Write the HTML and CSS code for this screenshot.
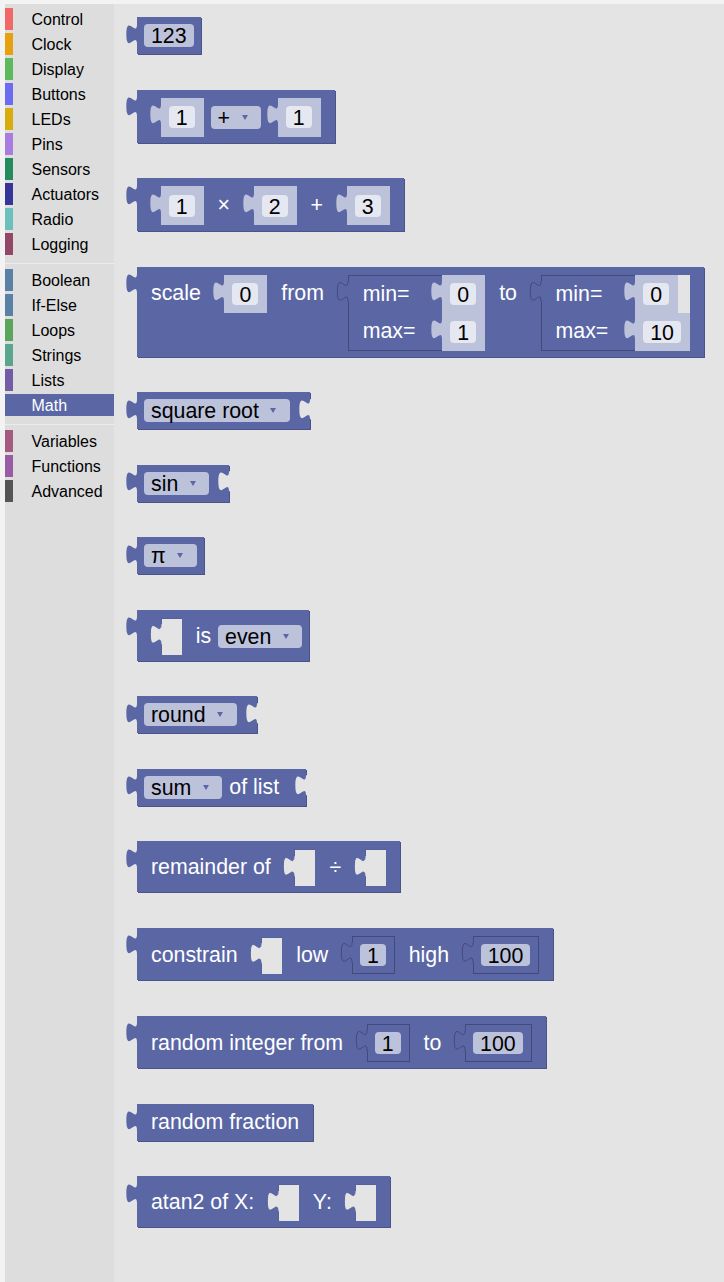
FILE: index.html
```html
<!DOCTYPE html>
<html>
<head>
<meta charset="utf-8">
<title>Math</title>
<link rel="stylesheet" href="styles.css">
</head>
<body>
<svg class="defs" aria-hidden="true"><defs><symbol id="tab" viewBox="-9 4 10 17"><path stroke="none" d="M1,20 H0 C0,10 -8,28 -8,12.5 S0,15 0,5 H1 Z"/><path fill="none" vector-effect="non-scaling-stroke" d="M0,20 C0,10 -8,28 -8,12.5 S0,15 0,5"/></symbol></defs></svg>
<div class="app">
  <nav class="toolbox">
    <div class="cat k-control">Control</div>
    <div class="cat k-clock">Clock</div>
    <div class="cat k-display">Display</div>
    <div class="cat k-buttons">Buttons</div>
    <div class="cat k-leds">LEDs</div>
    <div class="cat k-pins">Pins</div>
    <div class="cat k-sensors">Sensors</div>
    <div class="cat k-actuators">Actuators</div>
    <div class="cat k-radio">Radio</div>
    <div class="cat k-logging">Logging</div>
    <div class="sep"></div>
    <div class="cat k-logic">Boolean</div>
    <div class="cat k-logic">If-Else</div>
    <div class="cat k-loops">Loops</div>
    <div class="cat k-text">Strings</div>
    <div class="cat k-lists">Lists</div>
    <div class="cat k-math sel">Math</div>
    <div class="sep"></div>
    <div class="cat k-vars">Variables</div>
    <div class="cat k-procs">Functions</div>
    <div class="cat k-adv">Advanced</div>
  </nav>
  <main class="flyout">
    <div class="blk"><svg class="tab"><use href="#tab"/></svg><span class="fld">123</span></div>

    <div class="blk inl"><svg class="tab"><use href="#tab"/></svg><span class="inp"><svg class="tab t-shd"><use href="#tab"/></svg><span class="shd"><span class="nf">1</span></span></span><span class="fld dd">+</span><span class="inp"><svg class="tab t-shd"><use href="#tab"/></svg><span class="shd"><span class="nf">1</span></span></span></div>

    <div class="blk inl"><svg class="tab"><use href="#tab"/></svg><span class="inp"><svg class="tab t-shd"><use href="#tab"/></svg><span class="shd"><span class="nf">1</span></span></span><span class="lbl">×</span><span class="inp"><svg class="tab t-shd"><use href="#tab"/></svg><span class="shd"><span class="nf">2</span></span></span><span class="lbl">+</span><span class="inp"><svg class="tab t-shd"><use href="#tab"/></svg><span class="shd"><span class="nf">3</span></span></span></div>

    <div class="blk tall"><svg class="tab"><use href="#tab"/></svg><span class="lbl">scale</span><span class="inp"><svg class="tab t-shd"><use href="#tab"/></svg><span class="shd s38"><span class="nf">0</span></span></span><span class="lbl">from</span><span class="inp"><svg class="tab t-box"><use href="#tab"/></svg><span class="obj"><span class="obj-body"><span class="ol">min=</span><span class="ol">max=</span></span><span class="inp r1"><svg class="tab t-shd"><use href="#tab"/></svg><span class="shd s38"><span class="nf">0</span></span></span><span class="inp r2"><svg class="tab t-shd"><use href="#tab"/></svg><span class="shd s38"><span class="nf">1</span></span></span></span></span><span class="lbl">to</span><span class="inp"><svg class="tab t-box"><use href="#tab"/></svg><span class="obj"><span class="obj-body"><span class="ol">min=</span><span class="ol">max=</span></span><span class="inp r1"><svg class="tab t-shd"><use href="#tab"/></svg><span class="shd s38"><span class="nf">0</span></span></span><span class="inp r2"><svg class="tab t-shd"><use href="#tab"/></svg><span class="shd s38"><span class="nf">10</span></span></span></span></span></div>

    <div class="blk ext"><svg class="tab"><use href="#tab"/></svg><span class="fld dd">square root</span><svg class="notch"><use href="#tab"/></svg></div>

    <div class="blk ext"><svg class="tab"><use href="#tab"/></svg><span class="fld dd">sin</span><svg class="notch"><use href="#tab"/></svg></div>

    <div class="blk"><svg class="tab"><use href="#tab"/></svg><span class="fld dd">π</span></div>

    <div class="blk inl"><svg class="tab"><use href="#tab"/></svg><span class="inp"><svg class="tab t-hole"><use href="#tab"/></svg><span class="hole"></span></span><span class="lbl">is</span><span class="fld dd">even</span></div>

    <div class="blk ext"><svg class="tab"><use href="#tab"/></svg><span class="fld dd">round</span><svg class="notch"><use href="#tab"/></svg></div>

    <div class="blk ext"><svg class="tab"><use href="#tab"/></svg><span class="fld dd">sum</span><span class="lbl">of list</span><svg class="notch"><use href="#tab"/></svg></div>

    <div class="blk inl"><svg class="tab"><use href="#tab"/></svg><span class="lbl">remainder of</span><span class="inp"><svg class="tab t-hole"><use href="#tab"/></svg><span class="hole"></span></span><span class="lbl">÷</span><span class="inp"><svg class="tab t-hole"><use href="#tab"/></svg><span class="hole"></span></span></div>

    <div class="blk inl"><svg class="tab"><use href="#tab"/></svg><span class="lbl">constrain</span><span class="inp"><svg class="tab t-hole"><use href="#tab"/></svg><span class="hole"></span></span><span class="lbl">low</span><span class="inp"><svg class="tab t-box"><use href="#tab"/></svg><span class="box"><span class="nf">1</span></span></span><span class="lbl">high</span><span class="inp"><svg class="tab t-box"><use href="#tab"/></svg><span class="box"><span class="nf">100</span></span></span></div>

    <div class="blk inl"><svg class="tab"><use href="#tab"/></svg><span class="lbl">random integer from</span><span class="inp"><svg class="tab t-box"><use href="#tab"/></svg><span class="box"><span class="nf">1</span></span></span><span class="lbl">to</span><span class="inp"><svg class="tab t-box"><use href="#tab"/></svg><span class="box"><span class="nf">100</span></span></span></div>

    <div class="blk"><svg class="tab"><use href="#tab"/></svg><span class="lbl">random fraction</span></div>

    <div class="blk inl"><svg class="tab"><use href="#tab"/></svg><span class="lbl">atan2 of X:</span><span class="inp"><svg class="tab t-hole"><use href="#tab"/></svg><span class="hole"></span></span><span class="lbl">Y:</span><span class="inp"><svg class="tab t-hole"><use href="#tab"/></svg><span class="hole"></span></span></div>
  </main>
</div>
</body>
</html>
```

FILE: styles.css
```css
* { box-sizing: border-box; }
html, body { margin: 0; padding: 0; }
body {
  background: #f3f3f3;
  font-family: "Liberation Sans", Arial, sans-serif;
  width: 724px;
  height: 1282px;
  overflow: hidden;
}
.defs { position: absolute; width: 0; height: 0; overflow: hidden; }

.app {
  display: flex;
  height: 1282px;
  padding: 4px 0 0 5px;
}

/* ---------- toolbox ---------- */
.toolbox {
  flex: none;
  width: 109px;
  background: #dddddd;
  padding-top: 4px;
}
.cat {
  height: 22px;
  margin-bottom: 3px;
  border-left: 8px solid #888;
  padding-left: 18.5px;
  font-size: 16px;
  line-height: 24px;
  color: #000;
  white-space: nowrap;
}
.sep {
  height: 1px;
  background: #ececec;
  margin: 8px 0 5px;
}
.k-control { border-left-color: #f06868; }
.k-clock { border-left-color: #e8a10e; }
.k-display { border-left-color: #5cba5c; }
.k-buttons { border-left-color: #6b6cef; }
.k-leds { border-left-color: #d9ac0e; }
.k-pins { border-left-color: #a97ddf; }
.k-sensors { border-left-color: #238b5d; }
.k-actuators { border-left-color: #36369a; }
.k-radio { border-left-color: #6bbfbd; }
.k-logging { border-left-color: #934766; }
.k-logic { border-left-color: #5b80a5; }
.k-loops { border-left-color: #5ba55b; }
.k-text { border-left-color: #5ba58c; }
.k-lists { border-left-color: #745ba5; }
.k-math { border-left-color: #5b67a5; }
.k-vars { border-left-color: #a55b80; }
.k-procs { border-left-color: #995ba5; }
.k-adv { border-left-color: #555555; }
.cat.sel { background: #5b67a5; color: #fff; }

/* ---------- flyout ---------- */
.flyout {
  flex: 1;
  background: #e4e4e4;
  padding: 13.3px 0 0 23px;
  display: flex;
  flex-direction: column;
  align-items: flex-start;
  gap: 35.5px;
}

.blk {
  position: relative;
  display: flex;
  align-items: center;
  background: #5b67a5;
  padding: 7px;
  box-shadow: 1px 1px 0 #4a5487;
  font-size: 16pt;
  white-space: nowrap;
}
.blk.inl { padding: 8px 7px 6px; }
.blk.tall { padding: 8px 7px 6px; align-items: flex-start; }
.blk.ext { padding-right: 20px; }

.tab {
  position: absolute;
  left: -12px;
  top: 5.33px;
  width: 13.33px;
  height: 22.67px;
  fill: #5b67a5;
  stroke-width: 1px;
  overflow: visible;
}
.tab.t-shd { fill: #bdc2db; }
.tab.t-hole { fill: #e4e4e4; stroke: #56619b; }
.tab.t-box { fill: #5b67a5; stroke: #414a7c; }
.notch {
  position: absolute;
  right: -1.33px;
  top: 5.33px;
  width: 13.33px;
  height: 22.67px;
  fill: #e4e4e4;
}

.lbl {
  color: #fff;
  padding: 0 7px;
  line-height: 23px;
}
.tall .lbl { line-height: 36px; }

.fld {
  display: flex;
  align-items: center;
  height: 23px;
  line-height: 21px;
  padding: 2px 7px 0;
  border-radius: 4px;
  background: rgba(255, 255, 255, 0.6);
  color: #000;
}
.dd { padding-right: 13.5px; }
.dd::after {
  content: "";
  margin-left: 11.5px;
  margin-top: -2px;
  border-left: 3px solid transparent;
  border-right: 3px solid transparent;
  border-top: 5px solid #5b67a5;
}

.inp {
  position: relative;
  display: block;
  flex: none;
  margin: 0 7px 0 16.67px;
}
.shd {
  display: flex;
  align-items: center;
  height: 39px;
  padding: 0 9px 0 8px;
  background: #bdc2db;
}
.shd.s38 { height: 38px; }
.nf {
  height: 22px;
  line-height: 20px;
  padding: 2px 7px 0;
  border-radius: 4px;
  background: rgba(255, 255, 255, 0.6);
  color: #000;
}
.hole {
  display: block;
  width: 21px;
  height: 37px;
  background: #e4e4e4;
  box-shadow: inset 1px 1px 0 #56619b;
}
.box {
  display: flex;
  align-items: center;
  height: 38.5px;
  padding: 0 8px 0 7px;
  background: #5b67a5;
  border: 1px solid #414a7c;
}

.obj {
  display: grid;
  grid-template-columns: auto auto;
  grid-template-rows: 38px 38px;
  background: #e4e4e4;
}
.obj-body {
  grid-column: 1;
  grid-row: 1 / 3;
  width: 94.6px;
  display: flex;
  flex-direction: column;
  padding-left: 14px;
  background: #5b67a5;
  border: 1px solid #414a7c;
  border-right: 0;
}
.ol {
  color: #fff;
  height: 37px;
  line-height: 37px;
}
.obj .inp { margin: 0; grid-column: 2; justify-self: start; }
.obj .inp.r1 { grid-row: 1; }
.obj .inp.r2 { grid-row: 2; }
```
